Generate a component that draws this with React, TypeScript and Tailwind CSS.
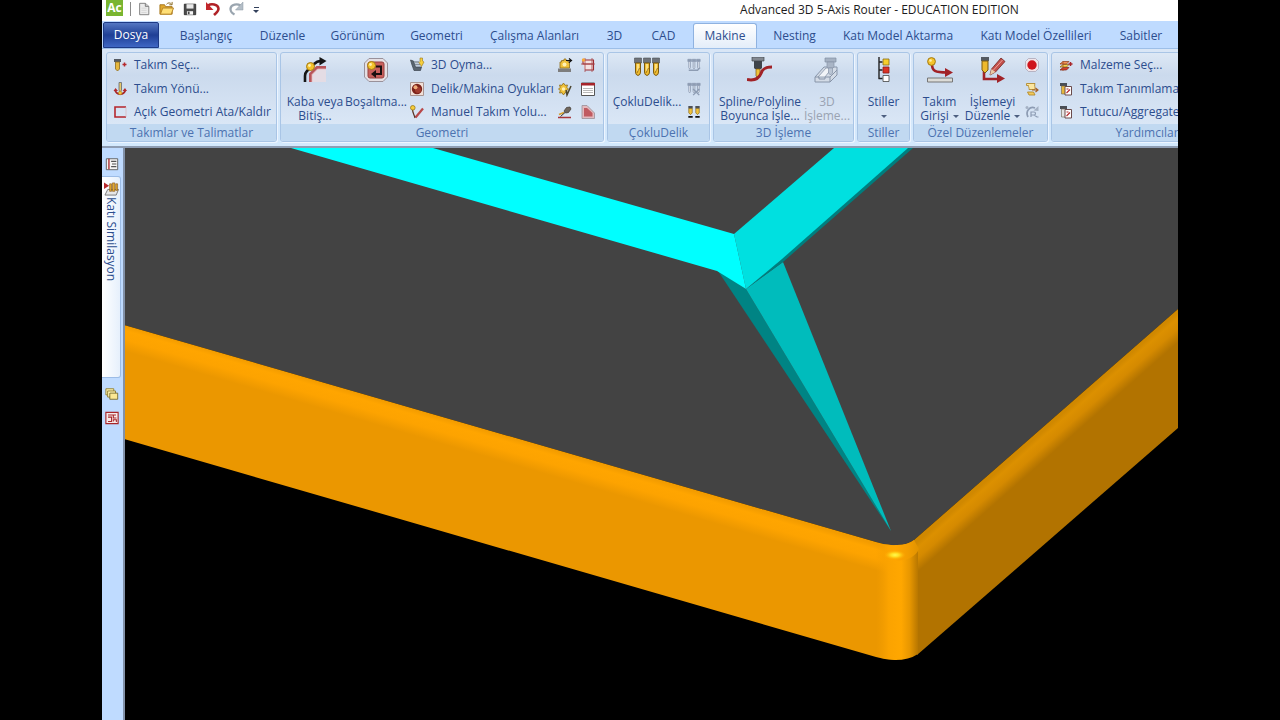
import type { ReactNode } from 'react';
import clsx from 'clsx';

type IconProps = { children: ReactNode; className?: string; box?: string };

function Icon({ children, className = 'size-4', box = '0 0 16 16' }: IconProps) {
  return (
    <svg viewBox={box} className={clsx('shrink-0', className)} fill="none" aria-hidden="true">
      {children}
    </svg>
  );
}

/* ---------- quick access icons ---------- */

const NewIcon = () => (
  <Icon className="size-[14px]">
    <path d="M3 1.5h6.5L13.500 5v9.500H3z" fill="#ececec" stroke="#777" />
    <path d="M9.500 1.500V5h4" fill="#ccc" stroke="#777" />
    <path d="M5 7h6M5 9.500h6M5 12h6" stroke="#d5d5d5" />
  </Icon>
);

const OpenIcon = () => (
  <Icon className="size-[15px]">
    <path d="M1 14V4h5l1 2h7v8z" fill="#e0a82c" stroke="#a5741c" />
    <path d="M1.500 14L4 7.500h11.500L13 14z" fill="#ffdf76" stroke="#b5832a" />
    <path d="M8 3.500c1.500-2 4-2 5.500 0M14 1v3h-3" stroke="#8a6a22" />
  </Icon>
);

const SaveIcon = () => (
  <Icon className="size-[14px]">
    <path d="M1.500 2.500h13v12h-13z" fill="#4a4a4a" stroke="#2b2b2b" />
    <path d="M4 2.500h8v5H4z" fill="#e9e9e9" />
    <path d="M4.500 10.500h7v4h-7z" fill="#f5f5f5" />
    <path d="M5.500 11h2v3h-2z" fill="#444" />
  </Icon>
);

const UndoIcon = () => (
  <Icon className="size-4">
    <path d="M3 4.500c3-2 10-1.500 10.500 3 .3 3-2.500 4.500-4.500 6.500" stroke="#b02227" strokeWidth="2.500" />
    <path d="M1 1v8h7.500z" fill="#c3262b" />
  </Icon>
);

const RedoIcon = () => (
  <Icon className="size-4">
    <path d="M12.500 4.500c-3-2-9.500-1.500-10 3-.3 3 2 5 4 6" stroke="#9aa5af" strokeWidth="2.300" />
    <path d="M15 1v8H7.500z" fill="#b4bec7" stroke="#8f9aa4" strokeWidth=".5" />
  </Icon>
);

/* ---------- small ribbon icons ---------- */

const ToolSelectIcon = () => (
  <Icon>
    <path d="M2 2h7v3H2z" fill="#555b63" />
    <path d="M3.500 5h4v7L5.500 14l-2-2z" fill="#e6b73c" stroke="#8b6a1d" strokeWidth=".8" />
    <path d="M10.500 7.500h4M12.500 5.500v4" stroke="#b5282c" strokeWidth="1.500" />
  </Icon>
);

const ToolDirectionIcon = () => (
  <Icon>
    <path d="M3 9c1.500 5.500 9 5.500 10.500 0" stroke="#a8262a" strokeWidth="1.800" />
    <path d="M1.500 10l2-3 2.500 3zM10.500 10l2.500-3 2 3z" fill="#b32c2f" />
    <path d="M7 1.500h2.500V9L8.200 11.500 7 9z" fill="#e8c96a" stroke="#63686f" strokeWidth=".8" />
    <circle cx="8.200" cy="12" r="1.800" fill="#f3c33a" stroke="#a37a14" strokeWidth=".5" />
  </Icon>
);

const OpenGeometryIcon = () => (
  <Icon>
    <path d="M14 3H3v10h11" stroke="#b5262c" strokeWidth="1.600" />
    <path d="M14 3v10" stroke="#d9b4ba" strokeWidth=".7" />
  </Icon>
);

const Carve3dIcon = () => (
  <Icon>
    <path d="M1.500 3l3 1 2 6h6l-1 3.500H5L3 8z" fill="#5a6570" stroke="#39434d" strokeWidth=".7" />
    <path d="M5 5h5M6 7.500h5" stroke="#87919b" strokeWidth="1.300" />
    <path d="M11 1h2.500v3l1.500 1-2.500 4.500L10 5.500l1-1z" fill="#f6cf3c" stroke="#9a7615" strokeWidth=".6" />
  </Icon>
);

const PocketIcon = () => (
  <Icon>
    <path d="M1.500 1.500h13v13h-13z" fill="#f2e0d8" stroke="#a99591" />
    <circle cx="8" cy="8" r="5.200" fill="#7c2319" />
    <circle cx="9" cy="9" r="3" fill="#a23c2e" />
    <circle cx="6.500" cy="6.300" r="2" fill="#f0ac7a" />
  </Icon>
);

const ManualPathIcon = () => (
  <Icon>
    <path d="M6.500 13.500L14 4.500" stroke="#b8484a" strokeWidth="2.200" />
    <path d="M3.500 5c0 4 1.500 5 2.500 9" stroke="#5a3424" strokeWidth="1.200" />
    <circle cx="3.800" cy="3.800" r="2.300" fill="#f6ce3a" stroke="#9a7615" strokeWidth=".8" />
  </Icon>
);

const GearPlateIcon = () => (
  <Icon>
    <path d="M1 11.500h13V15H1z" fill="#7d7d7d" />
    <path d="M3 11V5h1.500V3.500H7V2h2v1.500h2V5h1.500v6z" fill="#f0c23c" stroke="#8f6d17" strokeWidth=".8" />
    <circle cx="7.500" cy="7.500" r="2" fill="#fff1b5" />
    <path d="M9 3.500h5M12 1.500l2.500 2-2.500 2" stroke="#111" strokeWidth="1.200" />
  </Icon>
);

const GearCheckIcon = () => (
  <Icon>
    <path d="M2.500 12l.8-2.500L1.500 8l1.800-1.500L2.500 4l2.500.3L6.500 2 8 4.300l2.500-.3-.8 2.500L11.500 8 9.700 9.500l.8 2.500-2.500-.3-1.500 2.300L5 11.700z" fill="#f0c23c" stroke="#8f6d17" strokeWidth=".8" />
    <circle cx="6.500" cy="8" r="1.700" fill="#fff1b5" />
    <path d="M9 9l1 5 4-9" stroke="#4b4530" strokeWidth="1.500" />
  </Icon>
);

const BrushIcon = () => (
  <Icon>
    <path d="M1 13.500h13" stroke="#a8363a" strokeWidth="1.500" />
    <path d="M2 10.500l5-2" stroke="#d6a02e" strokeWidth="1.800" />
    <path d="M7 7l2.500-3.500L13 3l1 2-2.500 3.500L8.500 9z" fill="#70675d" stroke="#3c352e" strokeWidth=".7" />
    <path d="M3.500 12.500L8 8.500" stroke="#3c352e" />
  </Icon>
);

const FrameIcon = () => (
  <Icon>
    <path d="M3 3h10.500v4H3zM3 7h10.500v6H5" fill="#f4e3e3" stroke="#9c2a30" strokeWidth="1.100" />
    <path d="M5 1v14M12 1v14M1 7h14" stroke="#a8464a" strokeWidth=".8" />
    <circle cx="3.500" cy="3" r="1.700" fill="#f6a93a" />
  </Icon>
);

const SheetIcon = () => (
  <Icon>
    <path d="M1.500 2h13v12.500h-13z" fill="#fff" stroke="#555" />
    <path d="M1 2h14v2.500H1z" fill="#a6242a" />
    <path d="M3 7.500h10M3 9.500h10M3 11.500h10" stroke="#b9b9b9" />
  </Icon>
);

const CornerIcon = () => (
  <Icon>
    <path d="M2 1.500h5L14.500 9v5.500H2z" fill="#e3b9be" stroke="#9b8f97" strokeWidth=".8" />
    <path d="M4 4h3l5.500 5v3.500H4z" fill="#c05a60" />
  </Icon>
);

function DrillTrio({ tone, mark }: { tone: string; mark: string }) {
  return (
    <Icon className="size-[14px]">
      {[1, 6, 11].map((x) => (
        <g key={x} stroke={tone} strokeWidth=".9">
          <path d={`M${x} 1.500h4v2.500h-4z`} fill={tone} />
          <path d={`M${x + 1} 4v7l1 1.500 1-1.500V4z`} fill="#dbe2ec" />
        </g>
      ))}
      <path d={mark} stroke={tone} strokeWidth="1.600" />
    </Icon>
  );
}

const DrillPairIcon = () => (
  <Icon className="size-[14px]">
    {[1.5, 9.5].map((x) => (
      <g key={x}>
        <path d={`M${x} 1h5v3h-5z`} fill="#4c5058" />
        <path d={`M${x + 0.5} 4h4v5l-2 2-2-2z`} fill="#f0c23c" stroke="#7b5d13" strokeWidth=".7" />
        <path d={`M${x} 12.500h5v2h-5z`} fill="#111" />
      </g>
    ))}
  </Icon>
);

const RecordIcon = () => (
  <Icon>
    <path d="M4.500 1.500h7l3 3v7l-3 3h-7l-3-3v-7z" fill="#f1e4e8" stroke="#a59fb0" strokeWidth=".7" />
    <circle cx="8" cy="8" r="4.700" fill="#cf141c" />
  </Icon>
);

const ScrollIcon = () => (
  <Icon>
    <path d="M2.500 2.500h8.500c-1 2 .5 4 0 6H5c.5-2-1-2.500-.5-4h-2z" fill="#fbe6a0" stroke="#b28a2c" strokeWidth=".9" />
    <path d="M3.500 11h6l1.500 3h-6z" fill="#f3c95a" stroke="#b28a2c" strokeWidth=".9" />
    <path d="M8 9h5M11.500 7l2.500 2-2.500 2" stroke="#a5622a" strokeWidth="1.200" />
  </Icon>
);

const RefreshIcon = () => (
  <Icon>
    <path d="M4 13C1 7 6 2 11 4" stroke="#8d9cb3" strokeWidth="1.700" />
    <path d="M9.500 6.500L14.500 7V2z" fill="#a4b1c4" />
    <path d="M7 13V8h3c2 0 2 3 0 3H7M10 11l3 2h1.500" stroke="#8d9cb3" strokeWidth="1.200" />
    <circle cx="3" cy="3.500" r="1.500" fill="#a4b1c4" />
  </Icon>
);

const MaterialIcon = () => (
  <Icon>
    <path d="M2 13l3-2.500h6L8.500 13z" fill="#d93f2f" stroke="#7d2018" strokeWidth=".7" />
    <path d="M2 10l3-2.500h6L8.500 10z" fill="#f5d552" stroke="#8b5e14" strokeWidth=".7" />
    <path d="M2 7l3-2.500h6L8.500 7z" fill="#f3965a" stroke="#8b3614" strokeWidth=".7" />
    <path d="M5 4v10" stroke="#a5502a" strokeWidth=".8" />
    <path d="M10.500 7h4M12.500 5v4" stroke="#a8262a" strokeWidth="1.500" />
  </Icon>
);

function ToolSheetIcon({ body }: { body: string }) {
  return (
    <Icon>
      <path d="M2 2h7v3H2z" fill="#4a4e55" />
      <path d="M3.500 5h4v8h-4z" fill={body} stroke="#6b6250" strokeWidth=".6" />
      <path d="M7 5.500h6.500V14H7z" fill="#fff" stroke="#6a4b4b" />
      <path d="M8.500 8h2M8.500 12l3.500-3.500" stroke="#b5282c" strokeWidth="1.100" />
    </Icon>
  );
}

/* ---------- large ribbon icons ---------- */

const RoughFinishIcon = () => (
  <Icon className="size-[26px]" box="0 0 26 26">
    <path d="M9 25v-8l6-6h9v14z" fill="#e4dce4" />
    <path d="M8.500 25v-8l6.500-6.500h9" stroke="#b8555a" strokeWidth="3" />
    <path d="M10 25v-7.500l5.500-5.500H24" stroke="#e9b9bb" strokeWidth=".8" />
    <path d="M3 25v-6c0-2 .5-3.500 2-5l7-7c2-2 4-3 7-3" stroke="#151515" strokeWidth="2.600" />
    <path d="M17.500 0l7 4-7 4.500z" fill="#151515" />
    <circle cx="8.500" cy="9.500" r="4" fill="#f4c32c" stroke="#a37a14" />
    <circle cx="7.500" cy="8.500" r="1.400" fill="#fff0ac" />
  </Icon>
);

const EmptyingIcon = () => (
  <Icon className="size-[26px]" box="0 0 26 26">
    <path d="M6 1.500h14L24.500 6v14L20 24.500H6L1.500 20V6z" fill="#e5dfe3" stroke="#99919a" />
    <rect x="5" y="5" width="16" height="16" rx="2" fill="#c9605c" stroke="#97403f" />
    <path d="M12.500 9.500H18V17h-6" stroke="#1b1010" strokeWidth="2" />
    <path d="M8 17l5-4v8z" fill="#1b1010" />
    <circle cx="8.500" cy="8.500" r="4" fill="#f4c32c" stroke="#a37a14" />
    <circle cx="7.500" cy="7.500" r="1.400" fill="#fff0ac" />
  </Icon>
);

const MultiDrillIcon = () => (
  <Icon className="size-[26px]" box="0 0 26 26">
    {[0.5, 9.5, 18.5].map((x) => (
      <g key={x}>
        <path d={`M${x} 1h7v5h-7z`} fill="#6f7379" stroke="#4c5055" strokeWidth=".6" />
        <path d={`M${x + 1} 6h5v9q0 3-2.500 3.500Q${x + 1} 18 ${x + 1} 15z`} fill="#f2bd2f" stroke="#7b5a10" />
        <path d={`M${x + 3.5} 7v7`} stroke="#fff1b0" strokeWidth="1.300" />
        <path d={`M${x + 2.5} 16l2.500-5`} stroke="#8d6714" strokeWidth=".8" />
      </g>
    ))}
  </Icon>
);

const SplineIcon = () => (
  <Icon className="size-[26px]" box="0 0 26 26">
    <path d="M5 0h12v4H5z" fill="#83888f" stroke="#43474d" strokeWidth=".7" />
    <path d="M7 4h8v7l-1 1H8l-1-1z" fill="#3f444b" />
    <path d="M9 12h4v7l-2 2-2-2z" fill="#f0c23c" stroke="#7b5a10" strokeWidth=".7" />
    <path d="M0 22.500c8 1.500 12-1 14-6 1.500-4.500 4-6.500 11-6.500" stroke="#a12227" strokeWidth="3" />
  </Icon>
);

const Machining3dIcon = () => (
  <Icon className="size-[26px]" box="0 0 26 26">
    <path d="M1 20l9-10h13v8l-7 7H1z" fill="#d3dbe6" stroke="#8794a8" />
    <path d="M4 20l8-9h6l-7 9z" fill="#f1f4f8" stroke="#8794a8" strokeWidth=".8" />
    <path d="M1 20h4v2h6v-2h5v5M16 20l7-7" stroke="#8794a8" />
    <path d="M11 1h11v4H11z" fill="#a5b1c2" stroke="#8390a4" strokeWidth=".7" />
    <path d="M13 5h7v5l-1 1h-5l-1-1z" fill="#a9b5c6" stroke="#8794a8" strokeWidth=".7" />
    <path d="M14.500 11h4v5l-2 2-2-2z" fill="#bac5d4" stroke="#8794a8" strokeWidth=".7" />
  </Icon>
);

const StylesIcon = () => (
  <Icon className="size-[26px]" box="0 0 26 26">
    <path d="M8 0v22M7.500 5h4M7.500 13h4M7.500 21.500h4" stroke="#222" strokeWidth="1.400" />
    <path d="M12 2h6v6h-6z" fill="#f6cf2c" stroke="#8b6d18" strokeWidth=".8" />
    <path d="M12 10h6v6h-6z" fill="#da3326" stroke="#8b1d18" strokeWidth=".8" />
    <path d="M12 18.500h6v6h-6z" fill="#fff" stroke="#444" strokeWidth=".8" />
  </Icon>
);

const ToolEntryIcon = () => (
  <Icon className="size-[26px]" box="0 0 26 26">
    <path d="M.5 21h25v4H.500z" fill="#dcdcd8" stroke="#777" />
    <path d="M5 7c0 7 3 8.500 15 8.500" stroke="#a12227" strokeWidth="2.600" />
    <path d="M18 11l8 4.500-8 4.500z" fill="#a12227" />
    <circle cx="4.500" cy="4.500" r="3.900" fill="#f4c32c" stroke="#a37a14" />
    <circle cx="3.500" cy="3.500" r="1.300" fill="#fff0ac" />
  </Icon>
);

const EditMachiningIcon = () => (
  <Icon className="size-[26px]" box="0 0 26 26">
    <path d="M4 13v9h15" stroke="#a12227" strokeWidth="2.600" />
    <path d="M17 17l8 4.500-8 4.500z" fill="#a12227" />
    <path d="M1 0h8v4H1z" fill="#555a61" />
    <path d="M2 4h6v9l-3 3-3-3z" fill="#eeb92d" stroke="#7b5a10" />
    <path d="M10 18l1.500-6L21 1l4 3.500L15.500 15z" fill="#c4504b" stroke="#70251f" strokeWidth=".8" />
    <path d="M10 18l1.500-6 4 3z" fill="#e9c9a5" />
    <path d="M13.500 13L22.500 3" stroke="#eba19a" />
  </Icon>
);

/* ---------- sidebar icons ---------- */

const TreeIcon = () => (
  <Icon className="size-[14px]">
    <path d="M1.500 2h13v12.500h-13z" fill="#f5f5f5" stroke="#555" />
    <path d="M4.500 2v12" stroke="#a8262a" strokeWidth="1.500" />
    <path d="M7 5h6M8 8h5M7 11h6" stroke="#555" strokeWidth="1.300" />
  </Icon>
);

const SimulationIcon = () => (
  <Icon className="size-[15px]">
    <path d="M1 15l3-6h11.500L13 15z" fill="#e6e6e6" stroke="#777" />
    <path d="M6 3h2v8H6zM9 2h2.500v9H9zM12.500 3h2v7h-2z" fill="#e3a92b" stroke="#7b4b10" strokeWidth=".6" />
    <path d="M0 1.500L5.500 5 0 8.500z" fill="#b5282c" />
  </Icon>
);

const LayersIcon = () => (
  <Icon className="size-[14px]">
    <path d="M1 2h9v7H1z" fill="#fff4b0" stroke="#8d7a2c" />
    <path d="M3 4.500h9v7H3z" fill="#fff4b0" stroke="#8d7a2c" />
    <path d="M5.500 7h9v7h-9z" fill="#fbe893" stroke="#74672a" />
  </Icon>
);

const NestIcon = () => (
  <Icon className="size-[14px]">
    <path d="M1 1.500h14v13H1z" fill="#f6e9e9" stroke="#a8262a" strokeWidth="1.300" />
    <path d="M3.500 4.500h9M3.500 7h4v5h-4M9.500 4.500V8h3.500M9.500 12V10h3.500v2.500" stroke="#a8262a" strokeWidth="1.200" />
  </Icon>
);

/* ---------- ribbon pieces ---------- */

const tabs = [
  { name: 'Başlangıç', width: 'w-[76px]' },
  { name: 'Düzenle', width: 'w-[67px]' },
  { name: 'Görünüm', width: 'w-[73px]' },
  { name: 'Geometri', width: 'w-[75px]' },
  { name: 'Çalışma Alanları', width: 'w-[111px]' },
  { name: '3D', width: 'w-[39px]' },
  { name: 'CAD', width: 'w-[49px]' },
  { name: 'Makine', width: 'w-[64px]' },
  { name: 'Nesting', width: 'w-[65px]' },
  { name: 'Katı Model Aktarma', width: 'w-[132px]' },
  { name: 'Katı Model Özellileri', width: 'w-[134px]' },
  { name: 'Sabitler', width: 'w-[66px]' },
];

function Group({ title, width, children }: { title: string; width: string; children: ReactNode }) {
  return (
    <section
      className={clsx(
        'flex h-[90px] shrink-0 flex-col overflow-hidden rounded-[3px] border border-[#a9c5e6] bg-linear-to-b from-[#dde8f5] from-0% via-[#cbdaed] via-25% to-[#dfebf9] shadow-[1px_1px_0_#edf5ff]',
        width,
      )}
    >
      <div className="flex h-[71px] shrink-0">{children}</div>
      <h2 className="h-[17px] bg-[#c1d9f1] text-center leading-[18px] text-[#4c72b0]">{title}</h2>
    </section>
  );
}

type LargeButtonProps = { icon: ReactNode; lines: string[]; width: string; disabled?: boolean; arrow?: boolean };

function LargeButton({ icon, lines, width, disabled, arrow }: LargeButtonProps) {
  return (
    <button
      type="button"
      disabled={disabled}
      className={clsx('flex shrink-0 flex-col items-center pt-1 leading-[14px] disabled:text-[#9aa3b2]', width)}
    >
      {icon}
      <span className="mt-3 flex flex-col items-center">
        {lines.map((line, i) => (
          <span key={line} className="flex items-center gap-1 whitespace-nowrap">
            {line}
            {arrow && i === lines.length - 1 && <Caret />}
          </span>
        ))}
      </span>
    </button>
  );
}

const Caret = () => <span className="border-x-3 border-t-3 border-x-transparent border-t-[#4d5f80]" />;

function SmallButton({ icon, label }: { icon: ReactNode; label: string }) {
  return (
    <button type="button" className="flex h-6 items-center gap-[6px] whitespace-nowrap">
      {icon}
      {label}
    </button>
  );
}

type IconColumnProps = { items: { label: string; icon: ReactNode }[]; width?: string };

function IconColumn({ items, width = 'w-[23px]' }: IconColumnProps) {
  return (
    <div className={clsx('flex shrink-0 flex-col items-center', width)}>
      {items.map((item) => (
        <button key={item.label} type="button" aria-label={item.label} className="flex h-6 items-center">
          {item.icon}
        </button>
      ))}
    </div>
  );
}

function TitleBar() {
  return (
    <header className="flex h-[21px] items-start bg-white pl-1">
      <span className="flex h-4 w-[17px] items-center justify-center bg-[#79b530] text-xs font-bold text-white">Ac</span>
      <span className="mt-[2px] ml-[7px] h-[14px] w-px bg-[#8b8b8b]" />
      <nav className="ml-px flex h-[17px] items-center">
        {[
          { label: 'Yeni', icon: <NewIcon /> },
          { label: 'Aç', icon: <OpenIcon /> },
          { label: 'Kaydet', icon: <SaveIcon /> },
          { label: 'Geri Al', icon: <UndoIcon /> },
          { label: 'Yinele', icon: <RedoIcon /> },
        ].map((item) => (
          <button key={item.label} type="button" aria-label={item.label} className="flex w-[23px] justify-center">
            {item.icon}
          </button>
        ))}
        <button type="button" aria-label="Özelleştir" className="mt-[3px] ml-[6px] flex flex-col items-center gap-[2px]">
          <span className="h-px w-[5px] bg-[#33415c]" />
          <span className="border-x-3 border-t-3 border-x-transparent border-t-[#33415c]" />
        </button>
      </nav>
      <h1 className="flex-1 pl-[322px] text-center leading-[19px] whitespace-nowrap text-[#1c1c1c]">
        Advanced 3D 5-Axis Router - EDUCATION EDITION
      </h1>
    </header>
  );
}

function TabStrip() {
  return (
    <nav className="flex h-[27px] items-end gap-[5px] overflow-hidden bg-[#bfdbff] pl-px whitespace-nowrap">
      <button
        type="button"
        className="mr-1 h-[26px] w-[56px] shrink-0 rounded-t-[2px] border border-[#1d3a86] bg-linear-to-b from-[#5577c2] from-0% via-[#1f3f95] via-50% to-[#3f67c4] text-white"
      >
        Dosya
      </button>
      {tabs.map((tab) => (
        <button
          key={tab.name}
          type="button"
          className={clsx(
            'h-[25px] shrink-0 rounded-t-[3px]',
            tab.width,
            tab.name === 'Makine' && 'border border-b-0 border-[#8fb2e0] bg-linear-to-b from-white to-[#e3edf9]',
          )}
        >
          {tab.name}
        </button>
      ))}
    </nav>
  );
}

function Ribbon() {
  return (
    <div className="h-[100px] overflow-hidden border-t border-b-2 border-t-[#9dbfe8] border-b-[#8e9db3] bg-linear-to-b from-[#d9e6f6] to-[#d3e9fd] pt-[3px] pl-1">
      <div className="flex gap-[3px]">
        <Group title="Takımlar ve Talimatlar" width="w-[171px]">
          <div className="flex flex-col items-start pl-[5px]">
            <SmallButton icon={<ToolSelectIcon />} label="Takım Seç..." />
            <SmallButton icon={<ToolDirectionIcon />} label="Takım Yönü..." />
            <SmallButton icon={<OpenGeometryIcon />} label="Açık Geometri Ata/Kaldır" />
          </div>
        </Group>
        <Group title="Geometri" width="w-[324px]">
          <div className="flex pl-1">
            <LargeButton icon={<RoughFinishIcon />} lines={['Kaba veya', 'Bitiş...']} width="w-[60px]" />
            <LargeButton icon={<EmptyingIcon />} lines={['Boşaltma...']} width="w-[62px]" />
          </div>
          <div className="flex w-[146px] flex-col items-start pl-[2px]">
            <SmallButton icon={<Carve3dIcon />} label="3D Oyma..." />
            <SmallButton icon={<PocketIcon />} label="Delik/Makina Oyukları" />
            <SmallButton icon={<ManualPathIcon />} label="Manuel Takım Yolu..." />
          </div>
          <IconColumn
            items={[
              { label: 'Parça İşle', icon: <GearPlateIcon /> },
              { label: 'Parça Denetle', icon: <GearCheckIcon /> },
              { label: 'Yüzey', icon: <BrushIcon /> },
            ]}
          />
          <IconColumn
            items={[
              { label: 'Çerçeve', icon: <FrameIcon /> },
              { label: 'Tablo', icon: <SheetIcon /> },
              { label: 'Köşe', icon: <CornerIcon /> },
            ]}
          />
        </Group>
        <Group title="ÇokluDelik" width="w-[103px]">
          <LargeButton icon={<MultiDrillIcon />} lines={['ÇokluDelik...']} width="w-[78px]" />
          <IconColumn
            width="w-[15px]"
            items={[
              { label: 'Delik Grubu', icon: <DrillTrio tone="#8d9cb3" mark="M2 14h10l3-3" /> },
              { label: 'Grubu Sil', icon: <DrillTrio tone="#8d9cb3" mark="M7 8l7 7M14 8l-7 7" /> },
              { label: 'Delik Çifti', icon: <DrillPairIcon /> },
            ]}
          />
        </Group>
        <Group title="3D İşleme" width="w-[141px]">
          <LargeButton icon={<SplineIcon />} lines={['Spline/Polyline', 'Boyunca İşle...']} width="w-[92px]" />
          <LargeButton icon={<Machining3dIcon />} lines={['3D', 'İşleme...']} width="w-[42px]" disabled />
        </Group>
        <Group title="Stiller" width="w-[53px]">
          <div className="flex flex-col items-center">
            <LargeButton icon={<StylesIcon />} lines={['Stiller']} width="w-[51px]" />
            <span className="pt-[9px]">
              <Caret />
            </span>
          </div>
        </Group>
        <Group title="Özel Düzenlemeler" width="w-[135px]">
          <LargeButton icon={<ToolEntryIcon />} lines={['Takım', 'Girişi']} width="w-[51px]" arrow />
          <LargeButton icon={<EditMachiningIcon />} lines={['İşlemeyi', 'Düzenle']} width="w-[55px]" arrow />
          <IconColumn
            items={[
              { label: 'Kaydet', icon: <RecordIcon /> },
              { label: 'Betik', icon: <ScrollIcon /> },
              { label: 'Yenile', icon: <RefreshIcon /> },
            ]}
          />
        </Group>
        <Group title="Yardımcılar" width="w-[192px]">
          <div className="flex flex-col items-start pl-[6px]">
            <SmallButton icon={<MaterialIcon />} label="Malzeme Seç..." />
            <SmallButton icon={<ToolSheetIcon body="#e6b73c" />} label="Takım Tanımlama..." />
            <SmallButton icon={<ToolSheetIcon body="#e4e4e4" />} label="Tutucu/Aggregate" />
          </div>
        </Group>
      </div>
    </div>
  );
}

function Sidebar() {
  return (
    <aside className="flex w-[23px] shrink-0 flex-col items-start border-r-2 border-[#8191a9] bg-[#bfdbff] pt-[9px]">
      <button type="button" aria-label="Operasyonlar" className="pl-[3px]">
        <TreeIcon />
      </button>
      <button
        type="button"
        className="mt-[5px] flex h-[202px] w-[19px] flex-col items-center rounded-r-[3px] border border-l-0 border-[#9cbce6] bg-linear-to-r from-white to-[#e6f0fc] pt-1"
      >
        <SimulationIcon />
        <span className="mt-px leading-[18px] whitespace-nowrap [writing-mode:vertical-rl]">Katı Similasyon</span>
      </button>
      <button type="button" aria-label="Katmanlar" className="mt-[9px] pl-[3px]">
        <LayersIcon />
      </button>
      <button type="button" aria-label="Yerleşim" className="mt-[10px] pl-[3px]">
        <NestIcon />
      </button>
    </aside>
  );
}

// Solid simulation: grey board top, orange edge and the cyan tool path cut
function Viewport() {
  return (
    <main className="relative min-w-0 flex-1 bg-black">
      <svg
        viewBox="125 148 1053 572"
        preserveAspectRatio="xMinYMin slice"
        className="absolute inset-0 size-full"
        role="img"
        aria-label="Katı Similasyon"
      >
        <defs>
          <linearGradient id="front" gradientUnits="userSpaceOnUse" x1="124" y1="325" x2="117" y2="349">
            <stop offset="0" stopColor="#f39c00" />
            <stop offset=".2" stopColor="#ffa500" />
            <stop offset=".55" stopColor="#fda300" />
            <stop offset="1" stopColor="#eb9700" />
          </linearGradient>
          <linearGradient id="side" gradientUnits="userSpaceOnUse" x1="915" y1="544" x2="930" y2="561">
            <stop offset="0" stopColor="#d08800" />
            <stop offset=".2" stopColor="#dc9000" />
            <stop offset=".55" stopColor="#d58a00" />
            <stop offset="1" stopColor="#b27300" />
          </linearGradient>
          <linearGradient id="corner" gradientUnits="userSpaceOnUse" x1="876" y1="0" x2="918" y2="0">
            <stop offset="0" stopColor="#f39d00" stopOpacity="0" />
            <stop offset=".3" stopColor="#fba300" />
            <stop offset=".6" stopColor="#ffa700" />
            <stop offset=".8" stopColor="#e89700" />
            <stop offset="1" stopColor="#b87700" />
          </linearGradient>
          <linearGradient id="cap" gradientUnits="userSpaceOnUse" x1="884" y1="0" x2="922" y2="0">
            <stop offset="0" stopColor="#ffa500" stopOpacity="0" />
            <stop offset=".3" stopColor="#ffa500" />
            <stop offset=".6" stopColor="#f49e00" />
            <stop offset="1" stopColor="#dc9000" />
          </linearGradient>
          <radialGradient id="glint">
            <stop offset="0" stopColor="#fffa50" />
            <stop offset=".4" stopColor="#ffdc20" />
            <stop offset="1" stopColor="#ffa800" stopOpacity="0" />
          </radialGradient>
        </defs>
        <path d="M124 148H1178V309L914 540Q908 545 897 545Q887 546 876 542L124 325z" fill="#434343" />
        <path d="M124 325L876 542Q887 546 897 545V660Q886 660 876 657L124 439z" fill="url(#front)" />
        <path d="M914 540L1178 309V428L917 655z" fill="url(#side)" />
        <path d="M876 542Q887 546 897 545Q908 545 914 540L918 549V654Q909 660 895 660Q886 660 876 657z" fill="url(#corner)" />
        <path d="M884 545Q890 546 897 545Q908 545 914 540L919 549Q914 560 897 561L884 560z" fill="url(#cap)" />
        <ellipse cx="895" cy="555" rx="11" ry="5" fill="url(#glint)" />
        <path d="M718 271L746 289L891 531z" fill="#008484" />
        <path d="M746 289L783 262L891 531z" fill="#00bcbc" />
        <path d="M746 289L905 148H913L783 262z" fill="#007e7e" />
        <path d="M734 234L834 148H908L782 259L746 289z" fill="#00e0e0" />
        <path d="M291 148H433L734 234L746 289L717 271z" fill="#00ffff" />
      </svg>
    </main>
  );
}

export default function App() {
  return (
    <div className="flex min-h-screen flex-col bg-black px-[102px] font-['Open_Sans','Noto_Sans',sans-serif] text-[12px] text-[#2c4d8e]">
      <TitleBar />
      <TabStrip />
      <Ribbon />
      <div className="flex flex-1 overflow-hidden">
        <Sidebar />
        <Viewport />
      </div>
    </div>
  );
}
